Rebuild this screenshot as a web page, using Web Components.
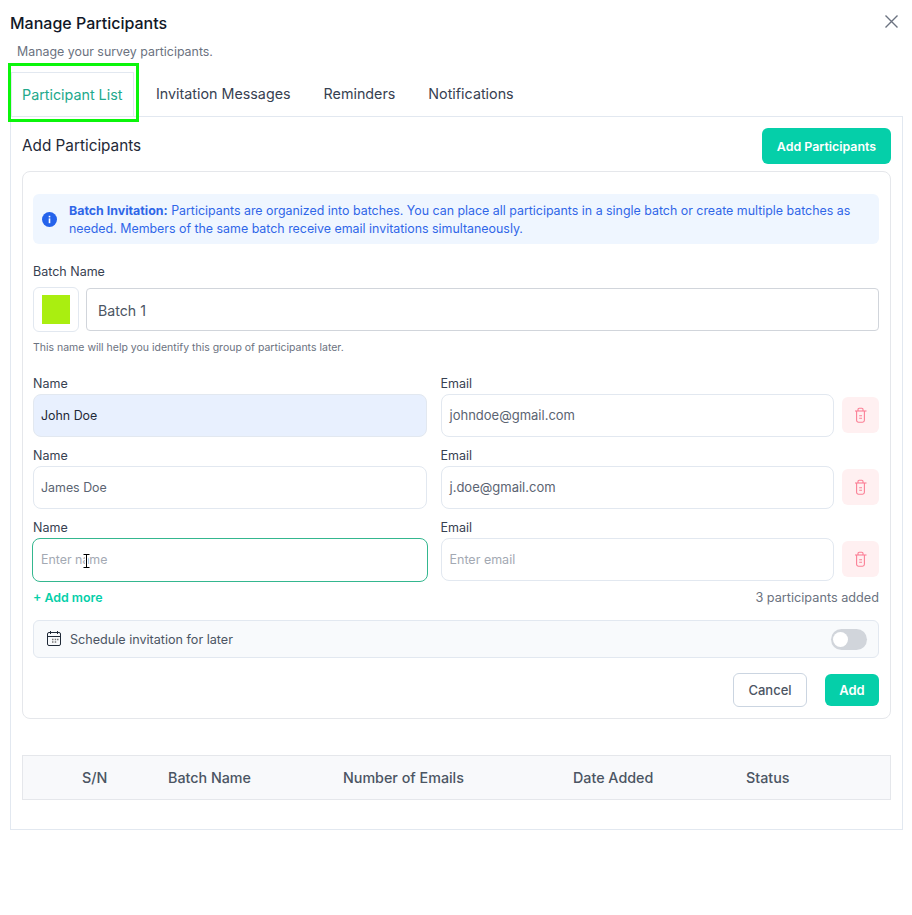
<!DOCTYPE html>
<html>
<head>
<meta charset="utf-8">
<title>Manage Participants</title>
<style>
  html, body { margin: 0; background: #fff; }
  body { font-family: Inter, "Noto Sans", sans-serif; color: #111827; }
</style>
</head>
<body>
<survey-modal></survey-modal>

<script>
class ModalTabs extends HTMLElement {
    constructor() {
        super();
        this.attachShadow({ mode: 'open' });
    }

    connectedCallback() {
        this.shadowRoot.innerHTML = `
      <style>
        :host{ display:flex; height:44px; margin-left:11px; position:relative; }
        .tab{
          box-sizing:border-box;
          height:44px;
          padding:0 11px 0 10px;
          font-size:14.3px;
          line-height:43px;
          color:#374151;
          margin-right:12px;
          white-space:nowrap;
        }
        .tab.on{
          width:123px;
          padding-right:0;
          color:#22a98c;
          border:1px solid #e2e8f0;
          border-bottom:0;
          background:#fff;
          line-height:44px;
        }
        .mark{
          position:absolute;
          left:-3px; top:-9px;
          width:131px; height:59px;
          box-sizing:border-box;
          border:3px solid #0bf50b;
          pointer-events:none;
        }
      </style>
      <div class="tab on">Participant List</div>
      <div class="tab">Invitation Messages</div>
      <div class="tab">Reminders</div>
      <div class="tab">Notifications</div>
      <div class="mark"></div>
    `;
    }
}

class InfoNote extends HTMLElement {
    constructor() {
        super();
        this.attachShadow({ mode: 'open' });
    }

    connectedCallback() {
        this.shadowRoot.innerHTML = `
      <style>
        :host{
          display:flex;
          box-sizing:border-box;
          height:50px;
          gap:12px;
          align-items:center;
          padding:0 16px 0 9px;
          background:#eff6ff;
          border-radius:6px;
          color:#2f66e8;
          font-size:12.4px;
          line-height:18px;
        }
        svg{ flex:none; }
        .txt{ padding-top:2px; }
        ::slotted(b){ font-weight:700; }
      </style>
      <svg width="15" height="15" viewBox="0 0 15 15">
        <circle cx="7.5" cy="7.5" r="7.5" fill="#2563eb"/>
        <rect x="6.7" y="6.4" width="1.6" height="4.8" fill="#fff"/>
        <rect x="6.7" y="3.8" width="1.6" height="1.6" fill="#fff"/>
      </svg>
      <div class="txt"><slot></slot></div>
    `;
    }
}

class PersonRow extends HTMLElement {
    constructor() {
        super();
        this.attachShadow({ mode: 'open' });
    }

    connectedCallback() {
        const name = this.getAttribute('name') ?? '';
        const email = this.getAttribute('email') ?? '';
        const state = this.getAttribute('state') ?? '';

        this.shadowRoot.innerHTML = `
      <style>
        :host{ display:flex; align-items:flex-end; }
        .cols{ flex:1; display:grid; grid-template-columns:1fr 1fr; column-gap:14px; }
        .lab{ font-size:12.5px; line-height:20px; color:#374151; }
        .field{
          position:relative;
          box-sizing:border-box;
          height:43px;
          border:1px solid #e2e8f0;
          border-radius:8px;
          padding:0 7px;
          font-size:12.4px;
          line-height:41px;
          color:#1f2937;
        }
        .mail{ font-size:13px; padding-left:8px; color:#5b6472; }
        .filled{ background:#e8f0fe; }
        .plain{ color:#5b6472; }
        .focus{
          height:44px;
          margin:0 -1px -1px;
          padding-left:8px;
          border-color:#34b78f;
          line-height:42px;
        }
        .ph{ color:#a3a9b3; }
        .mail .ph{ font-size:12.5px; }
        .caret{ position:absolute; left:49px; top:14px; }
        .del{
          flex:none;
          width:37px; height:36px;
          margin:0 0 4px 8px;
          border-radius:6px;
          background:#fff0f1;
          display:flex; align-items:center; justify-content:center;
        }
      </style>
      <div class="cols">
        <div>
          <div class="lab">Name</div>
          <div class="field ${state}">
            ${name ? name : '<span class="ph">Enter name</span>'}
            ${state === 'focus' ? `<svg class="caret" width="9" height="16" viewBox="0 0 9 16">
              <path d="M1 1h7M1 15h7M4.5 1v14" stroke="#fff" stroke-width="3" fill="none"/>
              <path d="M1.5 1.5h6M1.5 14.5h6M4.5 1.5v13" stroke="#000" stroke-width="1" fill="none"/>
            </svg>` : ''}
          </div>
        </div>
        <div>
          <div class="lab">Email</div>
          <div class="field mail">${email ? email : '<span class="ph">Enter email</span>'}</div>
        </div>
      </div>
      <div class="del">
        <svg width="14" height="16" viewBox="0 0 14 16" fill="none" stroke="#fb7f95" stroke-width="1.1">
          <path d="M1 4h11.5"/>
          <path d="M4 4V2.4a1.2 1.2 0 0 1 1.2-1.2h2.6a1.2 1.2 0 0 1 1.2 1.2V4"/>
          <path d="M2.6 4v9.3a1.9 1.9 0 0 0 1.9 1.9h4a1.9 1.9 0 0 0 1.9-1.9V4"/>
          <path d="M5.2 8.8h2.8M5.2 11.3h2.8"/>
        </svg>
      </div>
    `;
    }
}

class BatchForm extends HTMLElement {
    constructor() {
        super();
        this.attachShadow({ mode: 'open' });
    }

    connectedCallback() {
        this.shadowRoot.innerHTML = `
      <style>
        :host{
          display:block;
          border:1px solid #e5e7eb;
          border-radius:8px;
          padding:22px 11px 11px 10px;
        }
        .lab{ margin-top:18px; font-size:12.5px; line-height:20px; color:#374151; }
        .batch{ display:flex; align-items:center; gap:7px; margin-top:5px; }
        .swatch{
          box-sizing:border-box;
          width:46px; height:45px;
          border:1px solid #e2e8f0;
          border-radius:6px;
          display:flex; align-items:center; justify-content:center;
        }
        .swatch i{ display:block; width:28px; height:29px; background:#aaee10; }
        .bname{
          flex:1;
          box-sizing:border-box;
          height:43px;
          border:1px solid #d1d5db;
          border-radius:4px;
          padding:0 11px;
          font-size:14.2px;
          line-height:43px;
          color:#4b5563;
        }
        .help{ margin-top:7px; font-size:10.5px; line-height:18px; color:#6b7280; }
        .rows{ display:flex; flex-direction:column; gap:9px; margin-top:17px; }
        .more{ display:flex; justify-content:space-between; margin-top:7px; font-size:12.4px; line-height:20px; }
        .add{ color:#05cfa9; font-weight:600; }
        .count{ color:#6b7280; font-size:12.7px; }
        .sched{
          display:flex; align-items:center; gap:8px;
          box-sizing:border-box;
          height:38px;
          margin-top:12px;
          padding:0 11px 0 12px;
          background:#f8fafc;
          border:1px solid #e2e8f0;
          border-radius:6px;
          font-size:12.6px;
          color:#4b5563;
        }
        .sched span{ flex:1; }
        .toggle{ position:relative; width:36px; height:21px; border-radius:11px; background:#d1d5db; }
        .toggle::after{
          content:"";
          position:absolute; left:2px; top:3px;
          width:15px; height:15px;
          border-radius:50%;
          background:#fff;
        }
        .acts{ display:flex; justify-content:flex-end; align-items:center; gap:18px; margin-top:15px; }
        .cancel{
          box-sizing:border-box;
          width:74px; height:34px;
          border:1px solid #cbd5e1;
          border-radius:6px;
          text-align:center;
          font-size:13px; font-weight:500;
          line-height:32px;
          color:#4b5563;
        }
        .ok{
          width:54px; height:32px;
          border-radius:6px;
          background:#05cfa9;
          color:#fff;
          text-align:center;
          font-size:13px; font-weight:600;
          line-height:32px;
        }
      </style>
      <info-note><b>Batch Invitation:</b><span> Participants are organized into batches. You can place all participants in a single batch or create multiple batches as</span><br><span>needed. Members of the same batch receive email invitations simultaneously.</span></info-note>
      <div class="lab">Batch Name</div>
      <div class="batch">
        <div class="swatch"><i></i></div>
        <div class="bname">Batch 1</div>
      </div>
      <div class="help">This name will help you identify this group of participants later.</div>
      <div class="rows">
        <person-row name="John Doe" email="johndoe@gmail.com" state="filled"></person-row>
        <person-row name="James Doe" email="j.doe@gmail.com" state="plain"></person-row>
        <person-row state="focus"></person-row>
      </div>
      <div class="more">
        <div class="add">+ Add more</div>
        <div class="count">3 participants added</div>
      </div>
      <div class="sched">
        <svg width="16" height="16" viewBox="0 0 16 16" fill="none" stroke="#1f2937" stroke-width="1">
          <rect x="1.5" y="1.5" width="13" height="13" rx="1.5"/>
          <path d="M1.5 5.5h13M4.5 0v3M11.5 0v3"/>
          <path d="M6 8.5h1.5M8.7 8.5h1.5M11 8.5h1.5M6 11h1.5M8.7 11h1.5" stroke="#777" stroke-width="1.4"/>
        </svg>
        <span>Schedule invitation for later</span>
        <div class="toggle"></div>
      </div>
      <div class="acts">
        <div class="cancel">Cancel</div>
        <div class="ok">Add</div>
      </div>
    `;
    }
}

class BatchTable extends HTMLElement {
    constructor() {
        super();
        this.attachShadow({ mode: 'open' });
    }

    connectedCallback() {
        this.shadowRoot.innerHTML = `
      <style>
        :host{
          display:grid;
          grid-template-columns:86px 175px 230px 173px 1fr;
          box-sizing:border-box;
          height:45px;
          padding-left:59px;
          align-items:center;
          background:#f8f9fb;
          border:1px solid #e5e7eb;
          font-size:14.3px;
          font-weight:500;
          color:#4b5563;
        }
      </style>
      <div>S/N</div>
      <div>Batch Name</div>
      <div>Number of Emails</div>
      <div>Date Added</div>
      <div>Status</div>
    `;
    }
}

class SurveyModal extends HTMLElement {
    constructor() {
        super();
        this.attachShadow({ mode: 'open' });
    }

    connectedCallback() {
        this.shadowRoot.innerHTML = `
      <style>
        :host{ display:block; position:relative; padding-top:13px; }
        h1{ margin:0 0 0 10px; font-size:16px; font-weight:500; line-height:20px; color:#111827; }
        p{ margin:9px 0 10px 17px; font-size:12.4px; line-height:20px; color:#6b7280; }
        .x{ position:absolute; left:884px; top:14px; }
        .panel{
          box-sizing:border-box;
          margin:0 9px 0 10px;
          border:1px solid #e2e8f0;
          padding:11px 11px 29px;
        }
        .head{ display:flex; justify-content:space-between; align-items:center; margin-bottom:7px; }
        .head span{ font-size:15.3px; line-height:35px; align-self:flex-start; color:#1f2937; }
        .btn{
          width:129px; height:36px;
          border-radius:6px;
          background:#05cfa9;
          color:#fff;
          text-align:center;
          font-size:12.4px; font-weight:600;
          line-height:37px;
        }
        batch-table{ margin-top:36px; }
      </style>
      <h1>Manage Participants</h1>
      <svg class="x" width="15" height="15" viewBox="0 0 15 15" fill="none" stroke="#6b7280" stroke-width="1.4">
        <path d="M1.5 1.5l12 12M13.5 1.5l-12 12"/>
      </svg>
      <p>Manage your survey participants.</p>
      <modal-tabs></modal-tabs>
      <div class="panel">
        <div class="head">
          <span>Add Participants</span>
          <div class="btn">Add Participants</div>
        </div>
        <batch-form></batch-form>
        <batch-table></batch-table>
      </div>
    `;
    }
}

customElements.define('modal-tabs', ModalTabs);
customElements.define('info-note', InfoNote);
customElements.define('person-row', PersonRow);
customElements.define('batch-form', BatchForm);
customElements.define('batch-table', BatchTable);
customElements.define('survey-modal', SurveyModal);
</script>
</body>
</html>
